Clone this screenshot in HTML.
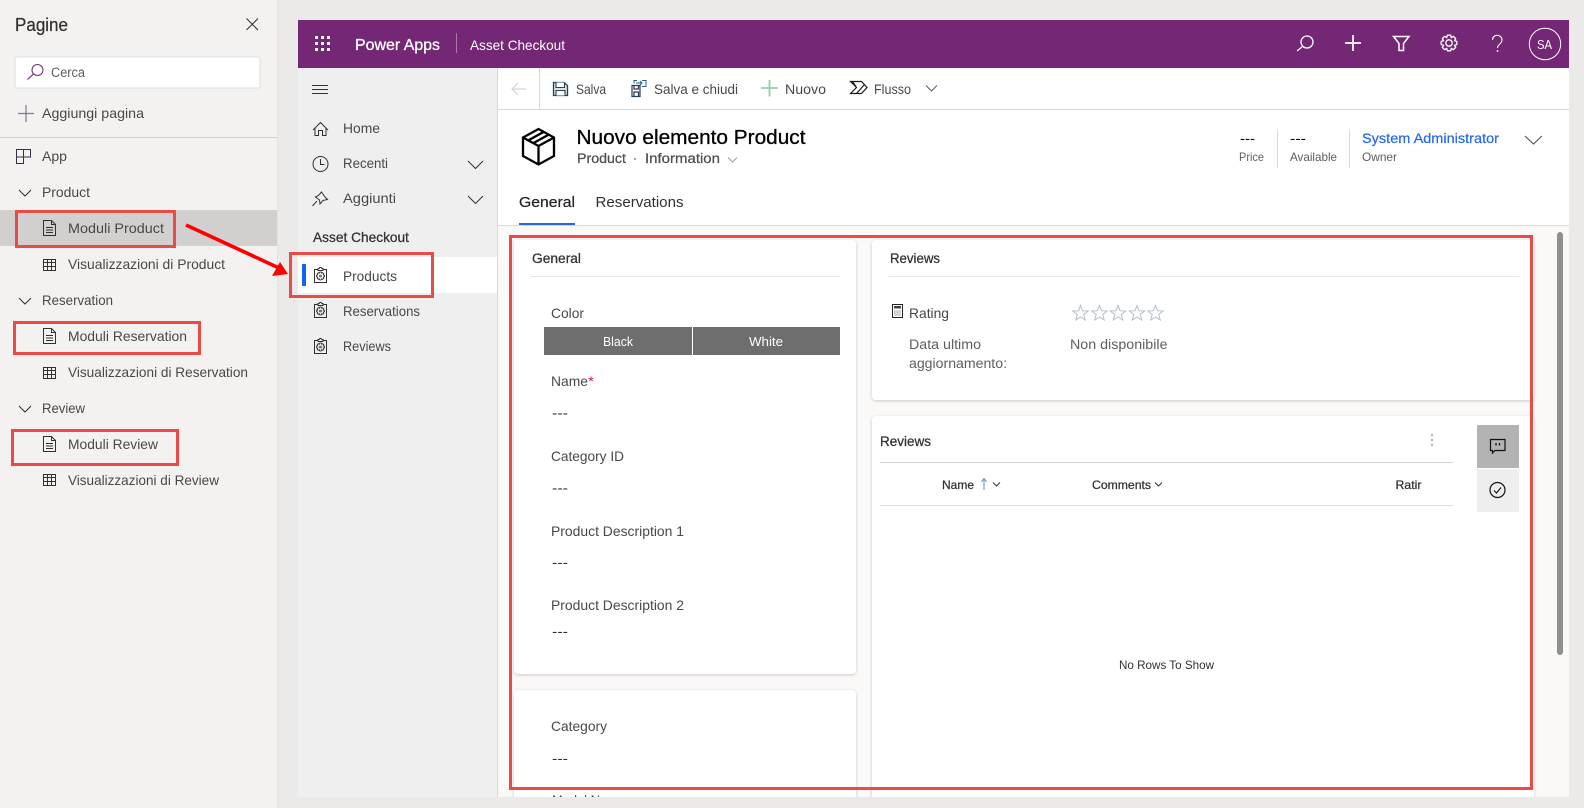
<!DOCTYPE html>
<html lang="it">
<head>
<meta charset="utf-8">
<title>Power Apps - Asset Checkout</title>
<style>
html,body{margin:0;padding:0;width:1584px;height:808px;overflow:hidden;background:#ebeae8}
svg{display:block}
text{font-family:"Liberation Sans",sans-serif;font-size:14px;fill:#323130;white-space:pre}
.s{font-size:13.5px;fill:#605e5c}
.l{fill:#4a4846}
.m{stroke:#323130;stroke-width:.25}
.ic{fill:none;stroke:#323130;stroke-width:1}
.w{fill:none;stroke:#fff;stroke-width:1.3}
.red{fill:none;stroke:#e94b47;stroke-width:3}
</style>
</head>
<body>
<svg width="1584" height="808" viewBox="0 0 1584 808" xmlns="http://www.w3.org/2000/svg">
<defs>
<filter id="sh" x="-5%" y="-5%" width="110%" height="110%"><feDropShadow dx="0" dy="1" stdDeviation="1.5" flood-color="#000" flood-opacity=".2"/></filter>
<polygon id="gear" points="7.83,-1.66 7.83,1.66 5.36,2.22 6.71,4.36 4.36,6.71 2.22,5.36 1.66,7.83 -1.66,7.83 -2.22,5.36 -4.36,6.71 -6.71,4.36 -5.36,2.22 -7.83,1.66 -7.83,-1.66 -5.36,-2.22 -6.71,-4.36 -4.36,-6.71 -2.22,-5.36 -1.66,-7.83 1.66,-7.83 2.22,-5.36 4.36,-6.71 6.71,-4.36 5.36,-2.22" stroke-linejoin="round"/>
<g id="doc" class="ic"><path d="M.5.5H8.5L12.5 4.5V15.5H.5Z"/><path d="M8.5.5V4.5H12.5M3 7.5H10M3 10H10M3 12.5H10"/></g>
<g id="grid" class="ic"><path d="M.5.5H12.5V11.500H.5ZM.5 3.500H12.500M.5 7.500H12.500M4.500.5V11.500M8.500.5V11.500"/></g>
<g id="chev"><path d="M0 0L6 6L12 0" fill="none" stroke="#323130" stroke-width="1"/></g>
<g id="clip" class="ic"><path d="M4 2.500H.5V15.500H12.500V2.500H9"/><path d="M4 3.500V1.500H5.200C5.500 0 7.500 0 7.800 1.500H9V3.500Z"/><use href="#gear" transform="translate(6.500 9) scale(.5)" stroke-width="1.800"/><circle cx="6.500" cy="9" r=".9" stroke-width=".8"/></g>
<polygon id="star" points="0,-8.500 2.120,-2.910 8.080,-2.630 3.420,1.110 5,6.880 0,3.600 -5,6.880 -3.420,1.110 -8.080,-2.630 -2.120,-2.910" fill="#fff" stroke="#b4c0cc" stroke-width="1.050" transform="scale(.95)"/>
</defs>

<!-- page background -->
<rect width="1584" height="808" fill="#ebeae8"/>

<!-- left panel -->
<rect x="0" y="0" width="277" height="808" fill="#f3f2f1"/>
<rect x="277" y="0" width="1" height="808" fill="#e4e3e1"/>
<text x="15" y="31" textLength="53" lengthAdjust="spacingAndGlyphs" style="font-size:18px" class="m">Pagine</text>
<path d="M246.500 18.500L258 30M258 18.500L246.500 30" class="ic"/>
<rect x="15" y="57" width="245" height="31" rx="2" fill="#fff" stroke="#e1dfdd"/>
<circle cx="37.500" cy="70" r="5.500" fill="none" stroke="#6b2d72" stroke-width="1"/>
<path d="M33.500 74L27.500 79.500" stroke="#7b3f85" stroke-width="1.200"/>
<text x="51" y="77" textLength="34" lengthAdjust="spacingAndGlyphs" class="s">Cerca</text>
<path d="M18 113.500H34M26 105V122" stroke="#8d7199" stroke-width="1.200" fill="none"/>
<text x="42" y="118" textLength="102" lengthAdjust="spacingAndGlyphs" class="l">Aggiungi pagina</text>
<rect x="0" y="137" width="277" height="1" fill="#d2d0ce"/>
<path d="M16.500 149.500H30.500V157H23.500V163.500H16.500ZM23.500 149.500V157H16.500" fill="none" stroke="#3a2c48" stroke-width="1"/>
<text x="42" y="161" textLength="25" lengthAdjust="spacingAndGlyphs" class="l">App</text>

<use href="#chev" x="19" y="190"/>
<text x="42" y="197" textLength="48" lengthAdjust="spacingAndGlyphs" class="l">Product</text>
<rect x="0" y="210" width="277" height="36" fill="#d2d0ce"/>
<use href="#doc" x="43" y="220"/>
<text x="68" y="233" textLength="96" lengthAdjust="spacingAndGlyphs" class="l">Moduli Product</text>
<use href="#grid" x="43" y="259"/>
<text x="68" y="269" textLength="157" lengthAdjust="spacingAndGlyphs" class="l">Visualizzazioni di Product</text>

<use href="#chev" x="19" y="298"/>
<text x="42" y="305" textLength="71" lengthAdjust="spacingAndGlyphs" class="l">Reservation</text>
<use href="#doc" x="43" y="328"/>
<text x="68" y="341" textLength="119" lengthAdjust="spacingAndGlyphs" class="l">Moduli Reservation</text>
<use href="#grid" x="43" y="367"/>
<text x="68" y="377" textLength="180" lengthAdjust="spacingAndGlyphs" class="l">Visualizzazioni di Reservation</text>

<use href="#chev" x="19" y="406"/>
<text x="42" y="413" textLength="43" lengthAdjust="spacingAndGlyphs" class="l">Review</text>
<use href="#doc" x="43" y="436"/>
<text x="68" y="449" textLength="90" lengthAdjust="spacingAndGlyphs" class="l">Moduli Review</text>
<use href="#grid" x="43" y="474"/>
<text x="68" y="485" textLength="151" lengthAdjust="spacingAndGlyphs" class="l">Visualizzazioni di Review</text>

<!-- app frame -->
<rect x="298" y="20" width="1271" height="777" fill="#fff"/>
<rect x="298" y="20" width="1271" height="48" fill="#742774"/>
<g fill="#fff">
<rect x="315" y="36" width="3" height="3"/><rect x="321" y="36" width="3" height="3"/><rect x="327" y="36" width="3" height="3"/>
<rect x="315" y="42" width="3" height="3"/><rect x="321" y="42" width="3" height="3"/><rect x="327" y="42" width="3" height="3"/>
<rect x="315" y="48" width="3" height="3"/><rect x="321" y="48" width="3" height="3"/><rect x="327" y="48" width="3" height="3"/>
</g>
<text x="355" y="50" textLength="85" lengthAdjust="spacingAndGlyphs" style="font-size:16px;fill:#fff;stroke:#fff;stroke-width:.3">Power Apps</text>
<rect x="456" y="33" width="1" height="20" fill="#a77aa7"/>
<text x="470" y="50" textLength="95" lengthAdjust="spacingAndGlyphs" style="fill:#fff">Asset Checkout</text>

<circle cx="1307" cy="42" r="6" class="w"/>
<path d="M1302.800 46.300L1297 51" class="w"/>
<path d="M1345 43H1361M1353 35V51" class="w" style="stroke-width:2;stroke:#eee6f0"/>
<path d="M1393.500 36.500H1409L1403.500 43.500V50.500H1399V43.500Z" class="w" style="stroke-width:1.500"/>
<use href="#gear" transform="translate(1449 43)" class="w" style="stroke-width:1.300"/>
<circle cx="1449" cy="43" r="3.200" class="w"/>
<path d="M1492.500 40C1492.500 33.500 1502 34 1502 40C1502 44 1497.500 44 1497.500 48" class="w" style="stroke-width:1.100"/>
<circle cx="1497.500" cy="51" r=".9" fill="#fff"/>
<circle cx="1545" cy="44" r="15.700" class="w" style="stroke-width:1"/>
<text x="1537" y="49" textLength="15" lengthAdjust="spacingAndGlyphs" style="font-size:13px;fill:#fff">SA</text>

<!-- nav -->
<rect x="298" y="68" width="199" height="729" fill="#efefef"/>
<rect x="497" y="68" width="1" height="729" fill="#d8d8d8"/>
<path d="M312 85.500H328M312 89.500H328M312 93.500H328" class="ic"/>
<path d="M313 130L320.500 122.500L328 130M315 128V135.500H318.500V130.500H322.500V135.500H326V128" class="ic"/>
<text x="343" y="133" textLength="37" lengthAdjust="spacingAndGlyphs" class="l">Home</text>
<circle cx="320.500" cy="164" r="7.500" class="ic"/>
<path d="M320.500 159V164.500H324.500" class="ic"/>
<text x="343" y="168" textLength="45" lengthAdjust="spacingAndGlyphs" class="l">Recenti</text>
<path d="M468 161L475.500 168.500L483 161" class="ic"/>
<path d="M321.500 192L325 197L327.500 199.500L323 200.500L320 204L319.500 200L315.500 197L318.500 195.500ZM317 201L312.500 206" class="ic"/>
<text x="343" y="203" textLength="53" lengthAdjust="spacingAndGlyphs" class="l">Aggiunti</text>
<path d="M468 196L475.500 203.500L483 196" class="ic"/>
<text x="313" y="242" textLength="96" lengthAdjust="spacingAndGlyphs" class="m">Asset Checkout</text>
<rect x="298" y="257" width="199" height="36" fill="#fff"/>
<rect x="302" y="264" width="4" height="22" fill="#0f62fe"/>
<use href="#clip" x="314" y="267"/>
<text x="343" y="281" textLength="54" lengthAdjust="spacingAndGlyphs" class="l">Products</text>
<use href="#clip" x="314" y="302"/>
<text x="343" y="316" textLength="77" lengthAdjust="spacingAndGlyphs" class="l">Reservations</text>
<use href="#clip" x="314" y="338"/>
<text x="343" y="351" textLength="48" lengthAdjust="spacingAndGlyphs" class="l">Reviews</text>

<!-- toolbar -->
<rect x="498" y="109" width="1071" height="1" fill="#d8d8d8"/>
<rect x="539" y="68" width="1" height="41" fill="#d8d8d8"/>
<path d="M526 89H512M518 83L512 89L518 95" fill="none" stroke="#d4d4d4" stroke-width="1.200"/>
<path d="M553.500 82.500H564L567.500 85.500V95.500H553.500Z" fill="#6f8ba0" fill-opacity=".25" stroke="#2b3f52" stroke-width="1.300"/>
<path d="M556 82.500V87.500H564.500V82.500M556 95.500V90.500H565V95.500" fill="#fff" stroke="#2b3f52" stroke-width="1.100"/>
<text x="576" y="94" textLength="30" lengthAdjust="spacingAndGlyphs" class="l">Salva</text>
<path d="M632 85.500H640V96.500H632ZM634 85.500V89H638.500V85.500M634 96.500V92H638.500V96.500" fill="none" stroke="#2b3f52" stroke-width="1.200"/>
<path d="M637 80.500H634V83.500M642 80.500H646V86.500H642M636 83H642M640 81L642 83L640 85" fill="none" stroke="#2a5a98" stroke-width="1"/>
<text x="654" y="94" textLength="84" lengthAdjust="spacingAndGlyphs" class="l">Salva e chiudi</text>
<path d="M761 88H778M769.500 80V96.500" fill="none" stroke="#8ed3a9" stroke-width="1.800"/>
<text x="785" y="94" textLength="41" lengthAdjust="spacingAndGlyphs" class="l">Nuovo</text>
<path d="M850.500 81.500H861.500L867 87.500L861.500 93.500H850.500L856.500 87.500ZM856.500 93.500L864.500 84.500M852.500 81.500L856.500 87.500" fill="none" stroke="#1c1c1c" stroke-width="1.200"/>
<text x="874" y="94" textLength="37" lengthAdjust="spacingAndGlyphs" class="l">Flusso</text>
<path d="M926 85.500L931.500 91L937 85.500" fill="none" stroke="#605e5c" stroke-width="1"/>

<!-- header -->
<path d="M538.500 129L554 137.500V156L538.500 164.500L523 156V137.500ZM523 137.500L538.500 146L554 137.500M538.500 146V164.500M528 140.500L543.500 132M533.500 143L549 134.500" fill="none" stroke="#000" stroke-width="2.300"/>
<text x="576.500" y="144" textLength="229" lengthAdjust="spacingAndGlyphs" style="font-size:20px;fill:#000;stroke:#000;stroke-width:.3">Nuovo elemento Product</text>
<text x="577" y="163" textLength="49" lengthAdjust="spacingAndGlyphs" style="font-size:13.500px;fill:#504e4c;stroke:#504e4c;stroke-width:.25">Product</text>
<circle cx="635" cy="159" r=".9" fill="#605e5c"/>
<text x="645" y="163" textLength="75" lengthAdjust="spacingAndGlyphs" style="font-size:13.500px;fill:#504e4c;stroke:#504e4c;stroke-width:.25">Information</text>
<path d="M728 157.500L732.500 162L737 157.500" fill="none" stroke="#a19f9d" stroke-width="1"/>

<text x="1240" y="143" textLength="15" lengthAdjust="spacingAndGlyphs" style="fill:#000">---</text>
<text x="1239" y="161" textLength="25" lengthAdjust="spacingAndGlyphs" style="font-size:12px;fill:#605e5c">Price</text>
<rect x="1277" y="130" width="1" height="38" fill="#d8d8d8"/>
<text x="1290" y="143" textLength="16" lengthAdjust="spacingAndGlyphs" style="fill:#000">---</text>
<text x="1290" y="161" textLength="47" lengthAdjust="spacingAndGlyphs" style="font-size:12px;fill:#605e5c">Available</text>
<rect x="1349" y="130" width="1" height="38" fill="#d8d8d8"/>
<text x="1362" y="143" textLength="137" lengthAdjust="spacingAndGlyphs" style="fill:#2266f0;stroke:#2266f0;stroke-width:.2">System Administrator</text>
<text x="1362" y="161" textLength="35" lengthAdjust="spacingAndGlyphs" style="font-size:12px;fill:#605e5c">Owner</text>
<path d="M1525 136L1533.500 144L1542 136" fill="none" stroke="#3f5566" stroke-width="1.100"/>

<!-- tabs -->
<text x="519" y="207" textLength="56" lengthAdjust="spacingAndGlyphs" class="m" style="font-size:15px;fill:#201f1e">General</text>
<text x="595.500" y="207" textLength="88" lengthAdjust="spacingAndGlyphs" style="font-size:15px">Reservations</text>
<rect x="519" y="223" width="56" height="2" fill="#2266e3"/>
<rect x="498" y="225" width="1071" height="1" fill="#d8d8d8"/>

<!-- form background -->
<rect x="498" y="226" width="1071" height="571" fill="#faf9f8"/>
<rect x="1557" y="232" width="6" height="423" rx="3" fill="#8f8f8d"/>

<!-- General card -->
<rect x="514" y="240" width="342" height="434" rx="4" fill="#fff" filter="url(#sh)"/>
<text x="532" y="263" textLength="49" lengthAdjust="spacingAndGlyphs" class="m" style="font-size:13.500px">General</text>
<rect x="530" y="276" width="310" height="1" fill="#e8e8e8"/>
<text x="551" y="318" textLength="33" lengthAdjust="spacingAndGlyphs" class="l">Color</text>
<rect x="544" y="327" width="296" height="28" fill="#6e6e6e"/>
<rect x="692" y="327" width="1" height="28" fill="#fff"/>
<text x="603" y="346" textLength="30" lengthAdjust="spacingAndGlyphs" style="font-size:13px;fill:#fff">Black</text>
<text x="749" y="346" textLength="34" lengthAdjust="spacingAndGlyphs" style="font-size:13px;fill:#fff">White</text>
<text x="551" y="386" textLength="37" lengthAdjust="spacingAndGlyphs" class="l">Name</text>
<text x="588" y="386" textLength="6" lengthAdjust="spacingAndGlyphs" style="fill:#d6234a">*</text>
<text x="552" y="417.500" textLength="16" lengthAdjust="spacingAndGlyphs">---</text>
<text x="551" y="461" textLength="73" lengthAdjust="spacingAndGlyphs" class="l">Category ID</text>
<text x="552" y="492.500" textLength="16" lengthAdjust="spacingAndGlyphs">---</text>
<text x="551" y="536" textLength="133" lengthAdjust="spacingAndGlyphs" class="l">Product Description 1</text>
<text x="552" y="567" textLength="16" lengthAdjust="spacingAndGlyphs">---</text>
<text x="551" y="610" textLength="133" lengthAdjust="spacingAndGlyphs" class="l">Product Description 2</text>
<text x="552" y="636" textLength="16" lengthAdjust="spacingAndGlyphs">---</text>

<!-- Second card -->
<rect x="514" y="690" width="342" height="140" rx="4" fill="#fff" filter="url(#sh)"/>
<text x="551" y="731" textLength="56" lengthAdjust="spacingAndGlyphs" class="l">Category</text>
<text x="552" y="763" textLength="16" lengthAdjust="spacingAndGlyphs">---</text>
<text x="552" y="805" textLength="55" lengthAdjust="spacingAndGlyphs" class="l">Model Na</text>

<!-- Reviews card -->
<rect x="872" y="240" width="662" height="160" rx="4" fill="#fff" filter="url(#sh)"/>
<text x="890" y="263" textLength="50" lengthAdjust="spacingAndGlyphs" class="m" style="font-size:13.500px">Reviews</text>
<rect x="889" y="276" width="630" height="1" fill="#e8e8e8"/>
<path d="M892.500 304.500H902.500V317.500H892.500Z" fill="none" stroke="#222" stroke-width="1"/>
<path d="M894 306H901V308.500H894Z" fill="#444"/>
<path d="M894.500 311H901M894.500 313H901M894.500 315H901" stroke="#555" stroke-width="1" stroke-dasharray="1 1" fill="none"/>
<text x="909" y="318" textLength="40" lengthAdjust="spacingAndGlyphs" class="l">Rating</text>
<use href="#star" x="1080.500" y="313.500"/>
<use href="#star" x="1099.500" y="313.500"/>
<use href="#star" x="1118" y="313.500"/>
<use href="#star" x="1137" y="313.500"/>
<use href="#star" x="1155.500" y="313.500"/>
<text x="909" y="349" textLength="72" lengthAdjust="spacingAndGlyphs" class="s">Data ultimo</text>
<text x="909" y="368" textLength="98" lengthAdjust="spacingAndGlyphs" class="s">aggiornamento:</text>
<text x="1070" y="349" textLength="97.500" lengthAdjust="spacingAndGlyphs" class="s">Non disponibile</text>

<!-- Reviews grid card -->
<rect x="872" y="416" width="662" height="400" rx="4" fill="#fff" filter="url(#sh)"/>
<text x="880" y="446" textLength="51" lengthAdjust="spacingAndGlyphs" class="m" style="font-size:13.500px">Reviews</text>
<circle cx="1432" cy="435" r=".9" fill="#777"/><circle cx="1432" cy="440" r=".9" fill="#777"/><circle cx="1432" cy="445" r=".9" fill="#777"/>
<rect x="880" y="462" width="573" height="1" fill="#d4d4d4"/>
<text x="942" y="489" textLength="32" lengthAdjust="spacingAndGlyphs" class="m" style="font-size:12px">Name</text>
<path d="M984 490V479M981.500 482L984 478.500L986.500 482" fill="none" stroke="#6f8fb0" stroke-width="1"/>
<path d="M993 482.500L996.500 486L1000 482.500" fill="none" stroke="#333" stroke-width="1"/>
<text x="1092" y="489" textLength="59" lengthAdjust="spacingAndGlyphs" class="m" style="font-size:12px">Comments</text>
<path d="M1155 482.500L1158.500 486L1162 482.500" fill="none" stroke="#333" stroke-width="1"/>
<text x="1395.500" y="489" textLength="26" lengthAdjust="spacingAndGlyphs" class="m" style="font-size:12px">Ratir</text>
<rect x="880" y="505" width="573" height="1" fill="#e0e0e0"/>
<rect x="1477" y="425" width="42" height="43" fill="#b3b3b3"/>
<rect x="1477" y="469" width="42" height="43" fill="#eeeeee"/>
<path d="M1490.500 439.500H1505V450.500H1495L1492.500 453V450.500H1490.500Z" fill="none" stroke="#111" stroke-width="1.200"/>
<path d="M1496 443V445.500M1499.500 443V445.500" stroke="#111" stroke-width="1.300"/>
<circle cx="1497.500" cy="490" r="7.500" fill="none" stroke="#111" stroke-width="1.200"/>
<path d="M1494 490.500L1496.500 493L1501 487.500" fill="none" stroke="#111" stroke-width="1.100"/>
<text x="1119" y="669" textLength="95" lengthAdjust="spacingAndGlyphs" style="font-size:12px">No Rows To Show</text>

<!-- bottom mask -->
<rect x="278" y="797" width="1306" height="11" fill="#ebeae8"/>
<rect x="1569" y="20" width="15" height="788" fill="#ebeae8"/>

<!-- annotations -->
<rect x="16.500" y="211.500" width="158" height="35" class="red"/>
<rect x="14.500" y="322.500" width="185" height="31" class="red"/>
<rect x="12.500" y="430.500" width="165" height="34" class="red"/>
<rect x="290.500" y="253.500" width="142" height="43" class="red"/>
<rect x="510.500" y="236.500" width="1021" height="552" class="red"/>
<path d="M186 225L279 268" stroke="#f00" stroke-width="3.600" fill="none"/>
<polygon points="288,274 272,276 280,262" fill="#f00"/>
</svg>
</body>
</html>
